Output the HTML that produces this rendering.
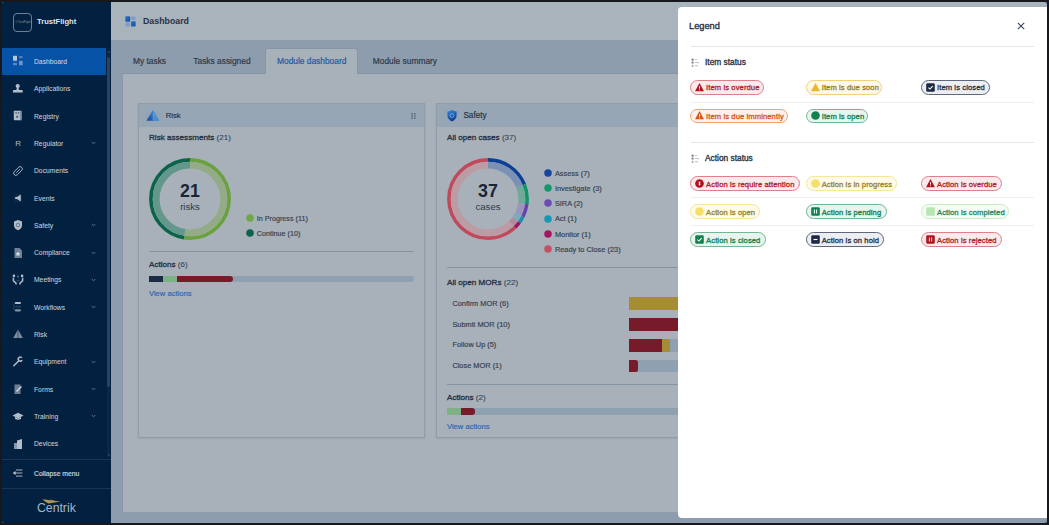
<!DOCTYPE html><html><head><meta charset="utf-8"><style>
*{margin:0;padding:0;box-sizing:border-box}
html,body{width:1049px;height:525px;overflow:hidden;background:#16181d;font-family:"Liberation Sans",sans-serif}
.a{position:absolute}
.t{position:absolute;white-space:nowrap;line-height:1}
.nav{position:absolute;left:0;width:104px;height:27px}
.nav .lb{position:absolute;left:32px;font-size:6.75px;white-space:nowrap;line-height:1;-webkit-text-stroke:0.05px currentColor}
.nav .ic{position:absolute;left:10px;top:7.5px;width:12px;height:12px}
.nav .ch{position:absolute;left:89px;top:11.5px;width:5px;height:4px}
.badge{position:absolute;height:14.5px;border:1px solid;border-radius:8px;font-size:7.6px;font-weight:400;-webkit-text-stroke:0.3px currentColor;letter-spacing:0.1px;white-space:nowrap;line-height:12.5px}
.badge span{position:absolute;top:1.2px}
.badge svg{position:absolute;left:4.0px;top:1.7px;width:9px;height:9px}
</style></head><body>
<div class="a" style="left:2px;top:2px;width:109px;height:521px;background:#02203f;"></div>
<div class="a" style="left:2px;top:2px;width:109px;height:521px"><div class="a" style="left:10.6px;top:10.5px;width:19.4px;height:19.2px;border:1px solid #6f8094;border-radius:4px"></div><svg class="a" style="left:12px;top:17px" width="18" height="6" viewBox="0 0 18 6"><text x="1.2" y="3.6" font-size="3.2" font-family="Liberation Sans" fill="#8394a8" textLength="15.6" lengthAdjust="spacingAndGlyphs">1 TrustFlight</text></svg><span class="t" style="left:35px;top:16.40px;font-size:7.6px;font-weight:700;color:#dfe5ec;">TrustFlight</span><div class="nav" style="top:45.9px;background:#0652a6;"><svg class="ic" viewBox="0 0 12 12"><rect x="1" y=".7" width="4" height="5" rx=".4" fill="#b9c6d4"/><rect x="7" y=".9" width="3.7" height="2.4" rx=".3" fill="#4f7dbb"/><rect x="1" y="7.8" width="4" height="2.5" rx=".3" fill="#5886c0"/><rect x="7" y="5.7" width="3.7" height="4.6" rx=".3" fill="#6e95c8"/></svg><span class="lb" style="top:11.2px;color:#cdd6e0">Dashboard</span></div><div class="nav" style="top:73.2px;"><svg class="ic" viewBox="0 0 12 12"><circle cx="5.7" cy="3" r="2.1" fill="#b3bdc9"/><path d="M4.7 4.4C4.7 6 4.9 6.6 3.6 7.1H1.9C1.2 7.1.9 7.7.9 8.3v1.3h9.9V8.3c0-.6-.4-1.2-1-1.2H7.8C6.5 6.6 6.7 6 6.7 4.4z" fill="#b3bdc9"/></svg><span class="lb" style="top:11.2px;color:#c9d2dc">Applications</span></div><div class="nav" style="top:100.5px;"><svg class="ic" viewBox="0 0 12 12"><rect x="1.8" y=".8" width="7.7" height="9.4" rx=".6" fill="#b3bdc9"/><rect x="8" y=".8" width="1.5" height="9.4" fill="#7d8ea2"/><rect x="3.2" y="2.2" width="1.7" height="1.5" fill="#56687e"/><rect x="5.6" y="2.2" width="1.7" height="1.5" fill="#56687e"/><circle cx="5.2" cy="6.8" r="1.2" fill="#56687e"/></svg><span class="lb" style="top:11.2px;color:#c9d2dc">Registry</span></div><div class="nav" style="top:127.8px;"><svg class="ic" viewBox="0 0 12 12"><text x="3.3" y="9.2" font-size="8" font-family="Liberation Sans" fill="#b3bdc9">R</text></svg><span class="lb" style="top:11.2px;color:#c9d2dc">Regulator</span><svg class="ch" viewBox="0 0 5 4"><path d="M.7 1l1.8 1.8L4.3 1" stroke="#8f9cac" stroke-width=".7" fill="none"/></svg></div><div class="nav" style="top:155.1px;"><svg class="ic" viewBox="0 0 12 12"><g transform="rotate(45 6 6)"><rect x="3.8" y="0.8" width="4.4" height="10.4" rx="2.2" fill="none" stroke="#b3bdc9" stroke-width="0.9"/><path d="M6 3.2v5.4" stroke="#b3bdc9" stroke-width="0.8"/></g></svg><span class="lb" style="top:11.2px;color:#c9d2dc">Documents</span></div><div class="nav" style="top:182.4px;"><svg class="ic" viewBox="0 0 12 12"><circle cx="6" cy="6" r="4.5" fill="#0a2a4c"/><path d="M3.2 5h1.8l3.8-2.4v6.8L5 7H3.2z" fill="#b3bdc9"/></svg><span class="lb" style="top:11.2px;color:#c9d2dc">Events</span></div><div class="nav" style="top:209.7px;"><svg class="ic" viewBox="0 0 12 12"><path d="M6 1l4 1.6v3.6c0 2.6-1.8 4.2-4 5-2.2-.8-4-2.4-4-5V2.6z" fill="#b3bdc9"/><circle cx="6" cy="6" r="1.8" fill="none" stroke="#5d6f85" stroke-width=".9"/></svg><span class="lb" style="top:11.2px;color:#c9d2dc">Safety</span><svg class="ch" viewBox="0 0 5 4"><path d="M.7 1l1.8 1.8L4.3 1" stroke="#8f9cac" stroke-width=".7" fill="none"/></svg></div><div class="nav" style="top:237.0px;"><svg class="ic" viewBox="0 0 12 12"><path d="M2.5 1h5l2.5 2.5V11h-7.5z" fill="#6f8096"/><path d="M6 4.5l.8 1.6 1.7.2-1.3 1.1.4 1.7L6 8.2l-1.6.9.4-1.7-1.3-1.1 1.7-.2z" fill="#d5dde6"/></svg><span class="lb" style="top:11.2px;color:#c9d2dc">Compliance</span><svg class="ch" viewBox="0 0 5 4"><path d="M.7 1l1.8 1.8L4.3 1" stroke="#8f9cac" stroke-width=".7" fill="none"/></svg></div><div class="nav" style="top:264.3px;"><svg class="ic" viewBox="0 0 12 12"><circle cx="6" cy="2.6" r="1.1" fill="#53667d"/><path d="M4.6 6.2c.4.8 2.4.8 2.8 0" stroke="#53667d" stroke-width=".8" fill="none"/><circle cx="1.9" cy="1.9" r="1.3" fill="#b3bdc9"/><circle cx="10.1" cy="1.9" r="1.3" fill="#b3bdc9"/><path d="M1.4 3.8v3l2.6 2.2v1.6M10.6 3.8v3L8 9v1.6" stroke="#b3bdc9" stroke-width="1.5" fill="none"/></svg><span class="lb" style="top:11.2px;color:#c9d2dc">Meetings</span><svg class="ch" viewBox="0 0 5 4"><path d="M.7 1l1.8 1.8L4.3 1" stroke="#8f9cac" stroke-width=".7" fill="none"/></svg></div><div class="nav" style="top:291.6px;"><svg class="ic" viewBox="0 0 12 12"><rect x="2.8" y="1.1" width="6.2" height="2" rx="1" fill="#b3bdc9"/><path d="M3.5 5.8h5.5" stroke="#3d5168" stroke-width="1"/><rect x="2.8" y="8.2" width="6.2" height="2.2" rx="1.1" fill="#7f90a4"/><path d="M3 2.1C1 2.6 1 5.4 3 5.8M3 5.8C1 6.3 1 8.8 3 9.3" stroke="#3d5168" stroke-width=".7" fill="none"/></svg><span class="lb" style="top:11.2px;color:#c9d2dc">Workflows</span><svg class="ch" viewBox="0 0 5 4"><path d="M.7 1l1.8 1.8L4.3 1" stroke="#8f9cac" stroke-width=".7" fill="none"/></svg></div><div class="nav" style="top:318.9px;"><svg class="ic" viewBox="0 0 12 12"><path d="M6 1.5l4.8 8.5H1.2z" fill="#7d8c9e"/><path d="M6 2v8" stroke="#02203f" stroke-width=".5"/></svg><span class="lb" style="top:11.2px;color:#c9d2dc">Risk</span></div><div class="nav" style="top:346.2px;"><svg class="ic" viewBox="0 0 12 12"><path d="M1.8 9.8L6.6 5" stroke="#b3bdc9" stroke-width="1.5" stroke-linecap="round"/><circle cx="8.3" cy="3.1" r="2" fill="none" stroke="#b3bdc9" stroke-width="1.6" stroke-dasharray="9.2 3.4" transform="rotate(28 8.3 3.1)"/></svg><span class="lb" style="top:11.2px;color:#c9d2dc">Equipment</span><svg class="ch" viewBox="0 0 5 4"><path d="M.7 1l1.8 1.8L4.3 1" stroke="#8f9cac" stroke-width=".7" fill="none"/></svg></div><div class="nav" style="top:373.5px;"><svg class="ic" viewBox="0 0 12 12"><path d="M2.5 1.5h6v9.5h-6z" fill="#6f8096"/><path d="M4.5 8.5l5-5" stroke="#d5dde6" stroke-width="1.3"/></svg><span class="lb" style="top:11.2px;color:#c9d2dc">Forms</span><svg class="ch" viewBox="0 0 5 4"><path d="M.7 1l1.8 1.8L4.3 1" stroke="#8f9cac" stroke-width=".7" fill="none"/></svg></div><div class="nav" style="top:400.8px;"><svg class="ic" viewBox="0 0 12 12"><path d="M6 2.8l5.5 2.8L6 8.4.5 5.6z" fill="#b3bdc9"/><path d="M3 7v2c1.8 1.1 4.2 1.1 6 0V7L6 8.5z" fill="#b3bdc9"/></svg><span class="lb" style="top:11.2px;color:#c9d2dc">Training</span><svg class="ch" viewBox="0 0 5 4"><path d="M.7 1l1.8 1.8L4.3 1" stroke="#8f9cac" stroke-width=".7" fill="none"/></svg></div><div class="nav" style="top:428.1px;"><svg class="ic" viewBox="0 0 12 12"><path d="M2 5h3.5V11H2z" fill="#8796a8"/><path d="M5 2.5l5-1.5V11H5z" fill="#b3bdc9"/></svg><span class="lb" style="top:11.2px;color:#c9d2dc">Devices</span></div><div class="a" style="left:105px;top:49px;width:3px;height:406px;background:#0b2746;"></div><div class="a" style="left:105px;top:55px;width:3px;height:330px;background:#2a4260;border-radius:1.5px"></div><svg class="a" style="left:104.5px;top:47.5px" width="4" height="3" viewBox="0 0 4 3"><path d="M.5 2.5L2 .8 3.5 2.5z" fill="#34506f"/></svg><svg class="a" style="left:104.5px;top:452px" width="4" height="3" viewBox="0 0 4 3"><path d="M.5 .5L2 2.2 3.5 .5z" fill="#34506f"/></svg><div class="a" style="left:0px;top:457px;width:109px;height:1px;background:#1a3452;"></div><svg class="a" style="left:10px;top:465.1px" width="12" height="12" viewBox="0 0 12 12"><path d="M4 3h6.4M3 6h7.4M4 9.1h6.4" stroke="#b9c3ce" stroke-width=".9"/><path d="M.6 6L3.6 4.1v3.8z" fill="#b9c3ce"/></svg><span class="t" style="left:32px;top:468.80px;font-size:6.8px;font-weight:400;color:#c9d2dc;-webkit-text-stroke:0.18px currentColor;">Collapse menu</span><div class="a" style="left:0px;top:485.5px;width:109px;height:1px;background:#1a3452;"></div><svg class="a" style="left:32px;top:493px" width="50" height="22" viewBox="0 0 50 22"><path d="M16 4.6l5.2.9-3.6.3z" fill="#7d8ea3"/><path d="M8.6 4.3L26.4 6.6 14.4 8.4C12 7.5 10 6 8.6 4.3z" fill="#b49750"/><text x="3.0" y="16.9" font-size="13.4" font-family="Liberation Sans" fill="#aab6c3" textLength="38.8" lengthAdjust="spacingAndGlyphs">Centrik</text></svg></div>
<div class="a" style="left:111px;top:2px;width:936px;height:38px;background:#a9b3bc;"></div>
<svg class="a" style="left:124.8px;top:15.6px" width="11" height="11" viewBox="0 0 11 11"><defs><linearGradient id="hg" x1="0" y1="0" x2="1" y2="1"><stop offset="0" stop-color="#2f72c0"/><stop offset="1" stop-color="#0d4ea6"/></linearGradient></defs><rect x=".3" y=".3" width="4.9" height="5.4" rx=".8" fill="url(#hg)"/><rect x="6" y=".5" width="4.6" height="3.6" rx=".8" fill="#7f9ec6"/><rect x=".3" y="6.6" width="4.9" height="3.9" rx=".8" fill="#7f9ec6"/><rect x="6" y="5.2" width="4.6" height="5.3" rx=".8" fill="url(#hg)"/></svg>
<span class="t" style="left:143px;top:17.30px;font-size:8.8px;font-weight:700;color:#283244;">Dashboard</span>
<div class="a" style="left:111px;top:40px;width:936px;height:483px;background:#8d9dad;"></div>
<span class="t" style="left:133px;top:56.70px;font-size:8.4px;font-weight:400;color:#2d3848;-webkit-text-stroke:0.18px currentColor;">My tasks</span>
<span class="t" style="left:193.3px;top:56.70px;font-size:8.4px;font-weight:400;color:#2d3848;-webkit-text-stroke:0.18px currentColor;">Tasks assigned</span>
<div class="a" style="left:122px;top:73px;width:925px;height:438.5px;background:#a8b1ba;border-top:1px solid #8294a6;border-left:1px solid #8a9aaa"></div>
<div class="a" style="left:265px;top:48px;width:93px;height:26px;background:#a8b1ba;border:1px solid #8496a8;border-bottom:none;border-radius:3px 3px 0 0"></div>
<span class="t" style="left:277px;top:56.90px;font-size:8.4px;font-weight:400;color:#1d58a2;-webkit-text-stroke:0.18px currentColor;">Module dashboard</span>
<span class="t" style="left:372.8px;top:56.70px;font-size:8.4px;font-weight:400;color:#2d3848;-webkit-text-stroke:0.18px currentColor;">Module summary</span>
<div class="a" style="left:138px;top:102.5px;width:287px;height:335.5px;background:#a8b1ba;border:1px solid #8f9dab;box-shadow:0 .5px 1.5px rgba(60,80,100,.28)"></div>
<div class="a" style="left:139px;top:103.5px;width:285px;height:23.5px;background:#97a6b4;"></div>
<div class="a" style="left:436px;top:102.5px;width:287px;height:335.5px;background:#a8b1ba;border:1px solid #8f9dab;box-shadow:0 .5px 1.5px rgba(60,80,100,.28)"></div>
<div class="a" style="left:437px;top:103.5px;width:285px;height:23.5px;background:#97a6b4;"></div>
<svg class="a" style="left:145px;top:109px" width="16" height="13" viewBox="0 0 16 13"><defs><linearGradient id="rg" x1="0" y1="1" x2="1" y2="0"><stop offset="0" stop-color="#0b4aa6"/><stop offset="1" stop-color="#4f9ad6"/></linearGradient></defs><rect x="0.5" y="3" width="15" height="6.2" fill="#8ea3ba" opacity=".6"/><path d="M8 1L14.4 11.8H1.4z" fill="url(#rg)"/><path d="M8 1L14.4 11.8H8z" fill="#6aa6d8" opacity=".55"/><path d="M8 4.5v1.6M8 7.2v1.4M8 9.6v1.2" stroke="#b8c8d8" stroke-width=".5"/></svg>
<span class="t" style="left:165.7px;top:111.85px;font-size:7.7px;font-weight:400;color:#283244;-webkit-text-stroke:0.18px currentColor;">Risk</span>
<svg class="a" style="left:410.5px;top:111.5px" width="5" height="8" viewBox="0 0 5 8"><g fill="#505b6c"><rect x=".3" y="1.1" width="1.4" height="1.4"/><rect x="3.1" y="1.1" width="1.4" height="1.4"/><rect x=".3" y="3.3" width="1.4" height="1.4"/><rect x="3.1" y="3.3" width="1.4" height="1.4"/><rect x=".3" y="5.6" width="1.4" height="1.4"/><rect x="3.1" y="5.6" width="1.4" height="1.4"/></g></svg>
<svg class="a" style="left:443.5px;top:109px" width="16" height="13" viewBox="0 0 16 13"><defs><linearGradient id="sg" x1="0" y1="0" x2="0.4" y2="1"><stop offset="0" stop-color="#3d8ad6"/><stop offset="1" stop-color="#0b3f98"/></linearGradient></defs><rect x="0.5" y="2.5" width="15" height="7.5" fill="#8ea3ba" opacity=".5"/><path d="M8 .8c1.2 1 2.8 1.6 4.6 1.8v4c0 2.8-2 4.8-4.6 5.9C5.4 11.4 3.4 9.4 3.4 6.6v-4C5.2 2.4 6.8 1.8 8 .8z" fill="url(#sg)"/><circle cx="8" cy="6.6" r="1.9" fill="none" stroke="#7fb0e0" stroke-width=".8"/><path d="M7.2 6.7l.7.6 1.2-1.2" stroke="#2060b0" stroke-width=".6" fill="none"/></svg>
<span class="t" style="left:463.4px;top:111.60px;font-size:8.2px;font-weight:400;color:#283244;-webkit-text-stroke:0.18px currentColor;">Safety</span>
<span class="t" style="left:149px;top:134.25px;font-size:8.1px;color:#283244"><b style="font-weight:400;-webkit-text-stroke:0.33px currentColor">Risk assessments </b><span style="color:#3a4556;-webkit-text-stroke:0.12px currentColor">(21)</span></span>
<span class="t" style="left:447px;top:134.25px;font-size:8.1px;color:#283244"><b style="font-weight:400;-webkit-text-stroke:0.33px currentColor">All open cases </b><span style="color:#3a4556;-webkit-text-stroke:0.12px currentColor">(37)</span></span>
<svg class="a" style="left:148px;top:157px" width="84" height="84" viewBox="0 0 84 84"><g transform="rotate(-90 42 42)"><circle cx="42" cy="42" r="39.10" fill="none" stroke="#6aa13e" stroke-width="3.6" stroke-dasharray="128.686 245.673" stroke-dashoffset="0.000"/><circle cx="42" cy="42" r="33.85" fill="none" stroke="#93ac87" stroke-width="6.9" stroke-dasharray="111.407 212.686" stroke-dashoffset="0.000"/><circle cx="42" cy="42" r="39.10" fill="none" stroke="#0b6449" stroke-width="3.6" stroke-dasharray="116.987 245.673" stroke-dashoffset="-128.686"/><circle cx="42" cy="42" r="33.85" fill="none" stroke="#64978b" stroke-width="6.9" stroke-dasharray="101.279 212.686" stroke-dashoffset="-111.407"/></g></svg>
<svg class="a" style="left:446px;top:157px" width="84" height="84" viewBox="0 0 84 84"><g transform="rotate(-90 42 42)"><circle cx="42" cy="42" r="39.10" fill="none" stroke="#0e3f96" stroke-width="3.6" stroke-dasharray="46.479 245.673" stroke-dashoffset="0.000"/><circle cx="42" cy="42" r="33.85" fill="none" stroke="#7a91b5" stroke-width="6.9" stroke-dasharray="40.238 212.686" stroke-dashoffset="0.000"/><circle cx="42" cy="42" r="39.10" fill="none" stroke="#0e9468" stroke-width="3.6" stroke-dasharray="19.919 245.673" stroke-dashoffset="-46.479"/><circle cx="42" cy="42" r="33.85" fill="none" stroke="#70a998" stroke-width="6.9" stroke-dasharray="17.245 212.686" stroke-dashoffset="-40.238"/><circle cx="42" cy="42" r="39.10" fill="none" stroke="#6444a8" stroke-width="3.6" stroke-dasharray="13.280 245.673" stroke-dashoffset="-66.398"/><circle cx="42" cy="42" r="33.85" fill="none" stroke="#9a95bd" stroke-width="6.9" stroke-dasharray="11.497 212.686" stroke-dashoffset="-57.483"/><circle cx="42" cy="42" r="39.10" fill="none" stroke="#178fb0" stroke-width="3.6" stroke-dasharray="6.640 245.673" stroke-dashoffset="-79.678"/><circle cx="42" cy="42" r="33.85" fill="none" stroke="#7cacbc" stroke-width="6.9" stroke-dasharray="5.748 212.686" stroke-dashoffset="-68.979"/><circle cx="42" cy="42" r="39.10" fill="none" stroke="#a0125a" stroke-width="3.6" stroke-dasharray="6.640 245.673" stroke-dashoffset="-86.317"/><circle cx="42" cy="42" r="33.85" fill="none" stroke="#b18aa2" stroke-width="6.9" stroke-dasharray="5.748 212.686" stroke-dashoffset="-74.727"/><circle cx="42" cy="42" r="39.10" fill="none" stroke="#c04a5c" stroke-width="3.6" stroke-dasharray="152.715 245.673" stroke-dashoffset="-92.957"/><circle cx="42" cy="42" r="33.85" fill="none" stroke="#bb9ca4" stroke-width="6.9" stroke-dasharray="132.210 212.686" stroke-dashoffset="-80.476"/></g></svg>
<div class="t" style="left:160px;width:60px;text-align:center;top:183.4px;font-size:17.8px;font-weight:700;color:#1b2436">21</div>
<div class="t" style="left:160px;width:60px;text-align:center;top:201.5px;font-size:9.6px;color:#2f3a4a">risks</div>
<div class="t" style="left:458px;width:60px;text-align:center;top:183.4px;font-size:17.8px;font-weight:700;color:#1b2436">37</div>
<div class="t" style="left:458px;width:60px;text-align:center;top:201.5px;font-size:9.6px;color:#2f3a4a">cases</div>
<svg class="a" style="left:245px;top:212.8px" width="10" height="10" viewBox="0 0 10 10"><circle cx="5" cy="5" r="3.75" fill="#6fa747"/></svg>
<span class="t" style="left:256.8px;top:214.60px;font-size:7.2px;font-weight:400;color:#374252;-webkit-text-stroke:0.18px currentColor;">In Progress (11)</span>
<svg class="a" style="left:245px;top:228.2px" width="10" height="10" viewBox="0 0 10 10"><circle cx="5" cy="5" r="3.75" fill="#0b6449"/></svg>
<span class="t" style="left:256.8px;top:230.00px;font-size:7.2px;font-weight:400;color:#374252;-webkit-text-stroke:0.18px currentColor;">Continue (10)</span>
<svg class="a" style="left:542.6px;top:168.0px" width="10" height="10" viewBox="0 0 10 10"><circle cx="5" cy="5" r="3.75" fill="#1445a0"/></svg>
<span class="t" style="left:554.9px;top:169.70px;font-size:7.4px;font-weight:400;color:#374252;-webkit-text-stroke:0.18px currentColor;">Assess (7)</span>
<svg class="a" style="left:542.6px;top:183.22px" width="10" height="10" viewBox="0 0 10 10"><circle cx="5" cy="5" r="3.75" fill="#16976a"/></svg>
<span class="t" style="left:554.9px;top:184.92px;font-size:7.4px;font-weight:400;color:#374252;-webkit-text-stroke:0.18px currentColor;">Investigate (3)</span>
<svg class="a" style="left:542.6px;top:198.44px" width="10" height="10" viewBox="0 0 10 10"><circle cx="5" cy="5" r="3.75" fill="#6a4cb2"/></svg>
<span class="t" style="left:554.9px;top:200.14px;font-size:7.4px;font-weight:400;color:#374252;-webkit-text-stroke:0.18px currentColor;">SIRA (2)</span>
<svg class="a" style="left:542.6px;top:213.66px" width="10" height="10" viewBox="0 0 10 10"><circle cx="5" cy="5" r="3.75" fill="#1796b4"/></svg>
<span class="t" style="left:554.9px;top:215.36px;font-size:7.4px;font-weight:400;color:#374252;-webkit-text-stroke:0.18px currentColor;">Act (1)</span>
<svg class="a" style="left:542.6px;top:228.88px" width="10" height="10" viewBox="0 0 10 10"><circle cx="5" cy="5" r="3.75" fill="#a5155e"/></svg>
<span class="t" style="left:554.9px;top:230.58px;font-size:7.4px;font-weight:400;color:#374252;-webkit-text-stroke:0.18px currentColor;">Monitor (1)</span>
<svg class="a" style="left:542.6px;top:244.10000000000002px" width="10" height="10" viewBox="0 0 10 10"><circle cx="5" cy="5" r="3.75" fill="#c45061"/></svg>
<span class="t" style="left:554.9px;top:245.80px;font-size:7.4px;font-weight:400;color:#374252;-webkit-text-stroke:0.18px currentColor;">Ready to Close (23)</span>
<div class="a" style="left:149px;top:251px;width:265px;height:1px;background:#8494a4;"></div>
<span class="t" style="left:149px;top:261.45px;font-size:8.1px;color:#283244"><b style="font-weight:400;-webkit-text-stroke:0.33px currentColor">Actions </b><span style="color:#3a4556;-webkit-text-stroke:0.12px currentColor">(6)</span></span>
<div class="a" style="left:149px;top:276px;width:265px;height:6px;background:#8fa0b0;border-radius:0 3px 3px 0"></div>
<div class="a" style="left:149px;top:276px;width:14px;height:6px;background:#1d2a44;"></div>
<div class="a" style="left:163px;top:276px;width:14px;height:6px;background:#7fb186;"></div>
<div class="a" style="left:177px;top:276px;width:56px;height:6px;background:#771a2a;border-radius:0 3px 3px 0"></div>
<span class="t" style="left:149px;top:289.90px;font-size:7.6px;font-weight:400;color:#2a68b2;-webkit-text-stroke:0.18px currentColor;">View actions</span>
<div class="a" style="left:447px;top:266.5px;width:265px;height:1px;background:#8494a4;"></div>
<span class="t" style="left:447px;top:279.15px;font-size:8.1px;color:#283244"><b style="font-weight:400;-webkit-text-stroke:0.33px currentColor">All open MORs </b><span style="color:#3a4556;-webkit-text-stroke:0.12px currentColor">(22)</span></span>
<span class="t" style="left:452.4px;top:300.10px;font-size:7.4px;font-weight:400;color:#374252;-webkit-text-stroke:0.18px currentColor;">Confirm MOR (6)</span>
<span class="t" style="left:452.4px;top:320.75px;font-size:7.4px;font-weight:400;color:#374252;-webkit-text-stroke:0.18px currentColor;">Submit MOR (10)</span>
<span class="t" style="left:452.4px;top:341.40px;font-size:7.4px;font-weight:400;color:#374252;-webkit-text-stroke:0.18px currentColor;">Follow Up (5)</span>
<span class="t" style="left:452.4px;top:362.05px;font-size:7.4px;font-weight:400;color:#374252;-webkit-text-stroke:0.18px currentColor;">Close MOR (1)</span>
<div class="a" style="left:629.4px;top:297.2px;width:83.10000000000002px;height:12.6px;background:#8fa0b0;border-radius:0 3px 3px 0"></div>
<div class="a" style="left:629.4px;top:318.09999999999997px;width:83.10000000000002px;height:12.6px;background:#8fa0b0;border-radius:0 3px 3px 0"></div>
<div class="a" style="left:629.4px;top:339.0px;width:83.10000000000002px;height:12.6px;background:#8fa0b0;border-radius:0 3px 3px 0"></div>
<div class="a" style="left:629.4px;top:359.9px;width:83.10000000000002px;height:12.6px;background:#8fa0b0;border-radius:0 3px 3px 0"></div>
<div class="a" style="left:629.4px;top:297.2px;width:83.10000000000002px;height:12.6px;background:#a68c34;"></div>
<div class="a" style="left:629.4px;top:318.1px;width:83.10000000000002px;height:12.6px;background:#771a2a;"></div>
<div class="a" style="left:629.4px;top:339.0px;width:41px;height:12.6px;background:#a68c34;border-radius:0 2.5px 2.5px 0"></div>
<div class="a" style="left:629.4px;top:339.0px;width:33.1px;height:12.6px;background:#771a2a;"></div>
<div class="a" style="left:629.4px;top:359.9px;width:8.2px;height:12.6px;background:#771a2a;border-radius:0 2.5px 2.5px 0"></div>
<div class="a" style="left:447px;top:383.5px;width:265px;height:1px;background:#8494a4;"></div>
<span class="t" style="left:447px;top:394.15px;font-size:8.1px;color:#283244"><b style="font-weight:400;-webkit-text-stroke:0.33px currentColor">Actions </b><span style="color:#3a4556;-webkit-text-stroke:0.12px currentColor">(2)</span></span>
<div class="a" style="left:447px;top:408px;width:265px;height:6.5px;background:#8fa0b0;border-radius:0 3px 3px 0"></div>
<div class="a" style="left:447px;top:408px;width:14px;height:6.5px;background:#7fb186;"></div>
<div class="a" style="left:461px;top:408px;width:14px;height:6.5px;background:#771a2a;border-radius:0 3px 3px 0"></div>
<span class="t" style="left:447px;top:422.70px;font-size:7.6px;font-weight:400;color:#2a68b2;-webkit-text-stroke:0.18px currentColor;">View actions</span>
<div class="a" style="left:678px;top:7px;width:369px;height:510.5px;background:#ffffff;border-radius:4px 0 0 4px"></div>
<span class="t" style="left:689px;top:21.98px;font-size:9.25px;font-weight:400;color:#283244;-webkit-text-stroke:0.35px currentColor;">Legend</span>
<svg class="a" style="left:1017px;top:21.7px" width="8" height="8" viewBox="0 0 8 8"><path d="M.8 .8l6.4 6.4M7.2 .8L.8 7.2" stroke="#3a4456" stroke-width="1.1"/></svg>
<div class="a" style="left:690.7px;top:46px;width:343.6px;height:1px;background:#e4e7eb;"></div>
<svg class="a" style="left:690.5px;top:57.7px" width="9" height="9" viewBox="0 0 9 9"><g fill="#7d8694"><circle cx="1.6" cy="1.6" r="1.2"/><rect x=".5" y="3.6" width="2.2" height="1.9"/><path d="M1.6 6.6L2.8 8.6H.4z"/></g><g stroke="#aab1bb" stroke-width=".8"><path d="M4 1.6h2M4 4.6h4.2M4 7.7h3.2"/></g></svg><span class="t" style="left:705px;top:58.23px;font-size:8.35px;font-weight:400;color:#283244;-webkit-text-stroke:0.33px currentColor;">Item status</span>
<div class="a" style="left:690.7px;top:102.3px;width:343.6px;height:1px;background:#eef0f3;"></div>
<div class="a" style="left:690.7px;top:142.3px;width:343.6px;height:1px;background:#e4e7eb;"></div>
<svg class="a" style="left:690.5px;top:153.7px" width="9" height="9" viewBox="0 0 9 9"><g fill="#7d8694"><circle cx="1.6" cy="1.6" r="1.2"/><rect x=".5" y="3.6" width="2.2" height="1.9"/><path d="M1.6 6.6L2.8 8.6H.4z"/></g><g stroke="#aab1bb" stroke-width=".8"><path d="M4 1.6h2M4 4.6h4.2M4 7.7h3.2"/></g></svg><span class="t" style="left:705px;top:154.22px;font-size:8.35px;font-weight:400;color:#283244;-webkit-text-stroke:0.33px currentColor;">Action status</span>
<div class="a" style="left:690.7px;top:197.2px;width:343.6px;height:1px;background:#eef0f3;"></div>
<div class="a" style="left:690.7px;top:225.2px;width:343.6px;height:1px;background:#eef0f3;"></div>
<div class="badge" style="left:690.2px;top:80px;width:74.2px;border-color:#de8089;background:#fbeaec;color:#b01f2e"><svg viewBox="0 0 8.5 8.5"><path d="M4.25 .1L8.45 7.9H.05z" fill="#b3111f"/><path d="M4.25 3v2.3M4.25 6.1v.8" stroke="#fff" stroke-width=".9"/></svg><span style="left:14.9px">Item is overdue</span></div>
<div class="badge" style="left:805.8px;top:80px;width:76.6px;border-color:#f3d07c;background:#fef8e7;color:#9a7e25"><svg viewBox="0 0 8.5 8.5"><path d="M4.25 .1L8.45 7.9H.05z" fill="#f0b429"/></svg><span style="left:14.9px">Item is due soon</span></div>
<div class="badge" style="left:921.1px;top:80px;width:68.6px;border-color:#5f687a;background:#eceef1;color:#283244"><svg viewBox="0 0 8.5 8.5"><rect x=".2" y=".2" width="8.1" height="8.1" rx="1.3" fill="#1e2a44"/><path d="M2.3 4.3l1.4 1.4 2.6-2.8" stroke="#fff" stroke-width="1" fill="none"/></svg><span style="left:14.9px">Item is closed</span></div>
<div class="badge" style="left:690.2px;top:108.8px;width:98.2px;border-color:#f1a378;background:#fdf1ea;color:#d3561d"><svg viewBox="0 0 8.5 8.5"><path d="M4.25 .1L8.45 7.9H.05z" fill="#d9551a"/><path d="M4.25 3v2.3M4.25 6.1v.8" stroke="#fff" stroke-width=".9"/></svg><span style="left:14.9px">Item is due imminently</span></div>
<div class="badge" style="left:805.8px;top:108.8px;width:62.4px;border-color:#74b596;background:#e8f4ee;color:#137f50"><svg viewBox="0 0 8.5 8.5"><circle cx="4.25" cy="4.25" r="4.1" fill="#13814f"/></svg><span style="left:14.9px">Item is open</span></div>
<div class="badge" style="left:690.2px;top:176.4px;width:109.6px;border-color:#de8089;background:#fbeaec;color:#b01f2e"><svg viewBox="0 0 8.5 8.5"><circle cx="4.25" cy="4.25" r="4.1" fill="#b3111f"/><path d="M3.4 2.5h1.7l-.3 1.75.3 1.75H3.4l.3-1.75z" fill="#fff"/></svg><span style="left:14.9px">Action is require attention</span></div>
<div class="badge" style="left:805.8px;top:176.4px;width:90.9px;border-color:#f6e59c;background:#fffbe8;color:#978430"><svg viewBox="0 0 8.5 8.5"><circle cx="4.25" cy="4.25" r="4.1" fill="#f6df68"/></svg><span style="left:14.9px">Action is in progress</span></div>
<div class="badge" style="left:921.1px;top:176.4px;width:80.6px;border-color:#de8089;background:#fbeaec;color:#b01f2e"><svg viewBox="0 0 8.5 8.5"><path d="M4.25 .1L8.45 7.9H.05z" fill="#b3111f"/><path d="M4.25 3v2.3M4.25 6.1v.8" stroke="#fff" stroke-width=".9"/></svg><span style="left:14.9px">Action is overdue</span></div>
<div class="badge" style="left:690.2px;top:204.4px;width:69.6px;border-color:#f6e59c;background:#fffbe8;color:#978430"><svg viewBox="0 0 8.5 8.5"><circle cx="4.25" cy="4.25" r="4.1" fill="#f6df68"/></svg><span style="left:14.9px">Action is open</span></div>
<div class="badge" style="left:805.8px;top:204.4px;width:80.8px;border-color:#74b596;background:#e8f4ee;color:#137f50"><svg viewBox="0 0 8.5 8.5"><rect x=".2" y=".2" width="8.1" height="8.1" rx="1.3" fill="#13814f"/><path d="M3.2 2.4v3.7M5.3 2.4v3.7" stroke="#fff" stroke-width="1"/></svg><span style="left:14.9px">Action is pending</span></div>
<div class="badge" style="left:921.1px;top:204.4px;width:88.2px;border-color:#c6eec0;background:#f6fcf4;color:#218767"><svg viewBox="0 0 8.5 8.5"><rect x=".2" y=".2" width="8.1" height="8.1" rx="1" fill="#b6e6b1"/></svg><span style="left:14.9px">Action is completed</span></div>
<div class="badge" style="left:690.2px;top:232.4px;width:75.6px;border-color:#74b596;background:#e8f4ee;color:#137f50"><svg viewBox="0 0 8.5 8.5"><rect x=".2" y=".2" width="8.1" height="8.1" rx="1.3" fill="#13814f"/><path d="M2.3 4.3l1.4 1.4 2.6-2.8" stroke="#fff" stroke-width="1" fill="none"/></svg><span style="left:14.9px">Action is closed</span></div>
<div class="badge" style="left:805.8px;top:232.4px;width:77.8px;border-color:#5f687a;background:#eceef1;color:#283244"><svg viewBox="0 0 8.5 8.5"><rect x=".2" y=".2" width="8.1" height="8.1" rx="1.3" fill="#1e2a44"/><path d="M2.4 4.25h3.7" stroke="#fff" stroke-width="1.1"/></svg><span style="left:14.9px">Action is on hold</span></div>
<div class="badge" style="left:921.1px;top:232.4px;width:80.6px;border-color:#de8089;background:#fbeaec;color:#b01f2e"><svg viewBox="0 0 8.5 8.5"><rect x=".2" y=".2" width="8.1" height="8.1" rx="1.3" fill="#b3111f"/><path d="M3.2 2.4v3.7M5.3 2.4v3.7" stroke="#f6d9a0" stroke-width="1"/></svg><span style="left:14.9px">Action is rejected</span></div>
<svg class="a" style="left:2px;top:2px" width="3" height="3" viewBox="0 0 3 3"><path d="M0 0h2.2C1 .4.4 1 0 2.2z" fill="#1f5d9a"/></svg>
<svg class="a" style="left:1044px;top:2px" width="3" height="3" viewBox="0 0 3 3"><path d="M3 0H.8c1.2.4 1.8 1 2.2 2.2z" fill="#1f5d9a"/></svg>
<svg class="a" style="left:2px;top:520px" width="3" height="3" viewBox="0 0 3 3"><path d="M0 3h2.2C1 2.6.4 2 0 .8z" fill="#1f5d9a"/></svg>
<svg class="a" style="left:1044px;top:520px" width="3" height="3" viewBox="0 0 3 3"><path d="M3 3H.8c1.2-.4 1.8-1 2.2-2.2z" fill="#1f5d9a"/></svg>
</body></html>
